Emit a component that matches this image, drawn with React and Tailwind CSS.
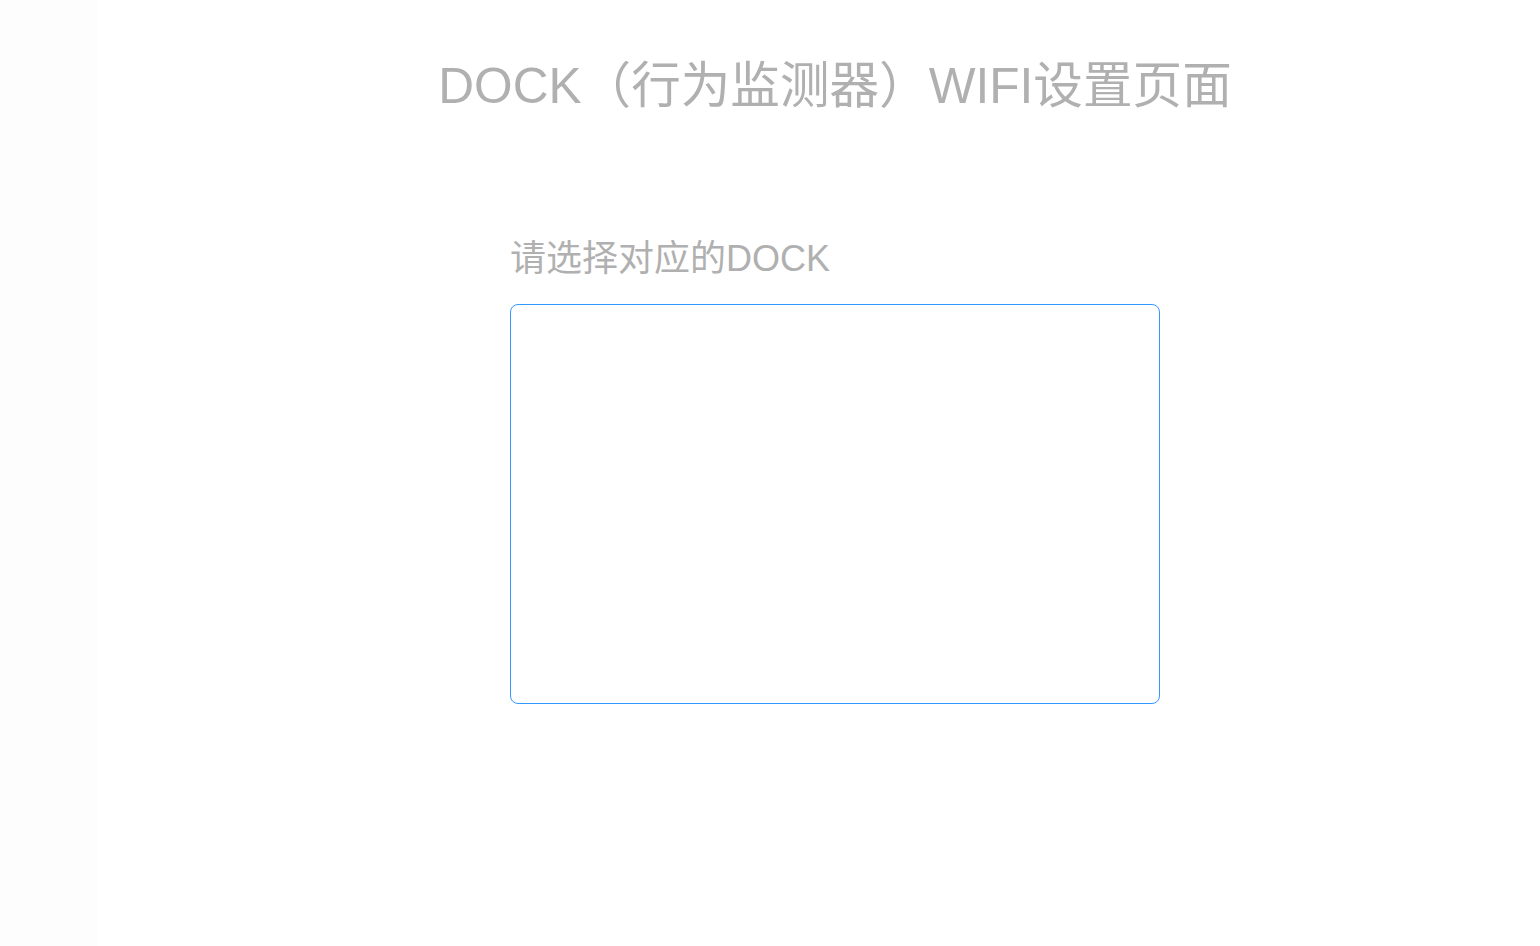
export default function App() {
  return (
    <div
      className="flex min-h-[946px] w-full bg-white text-[#b0b0b0]"
      style={{ fontFamily: '"Liberation Sans", "Noto Sans CJK SC", sans-serif' }}
    >
      <div className="w-[98px] shrink-0 bg-[#fdfdfd]"></div>
      <div className="flex flex-1 flex-col items-center pl-8">
        <h1 className="mt-[50px] text-[49.6px] leading-[72px] font-normal whitespace-nowrap">
          DOCK（行为监测器）WIFI设置页面
        </h1>
        <div className="mt-[112px] w-[650px]">
          <div className="text-[36px] leading-[50px] whitespace-nowrap">请选择对应的DOCK</div>
          <div className="mt-[20px] h-[400px] w-[650px] rounded-[8px] border border-[#3399ff] bg-white"></div>
        </div>
      </div>
    </div>
  );
}
